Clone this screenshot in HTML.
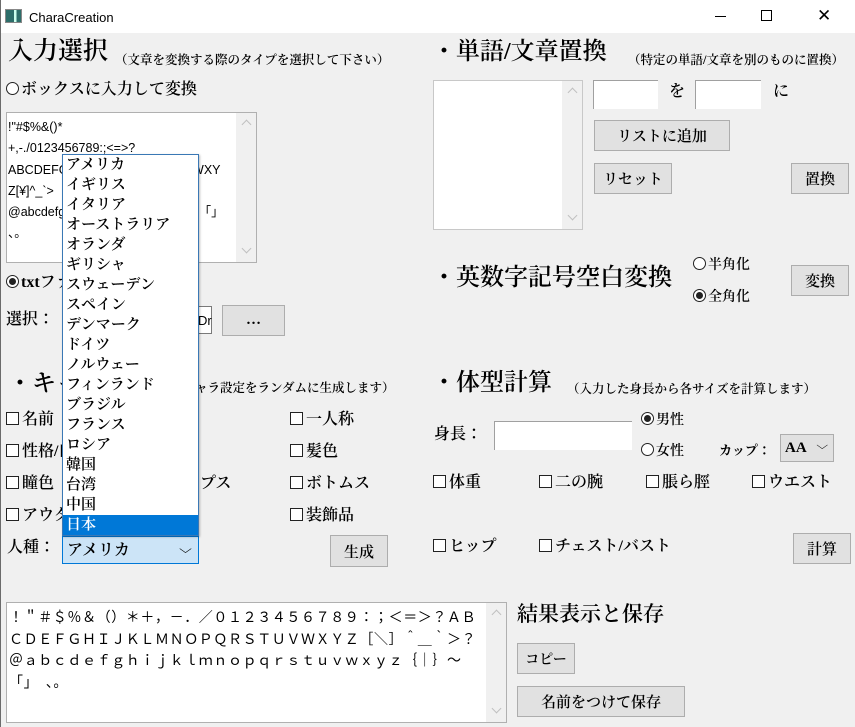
<!DOCTYPE html>
<html><head><meta charset="utf-8">
<style>
*{margin:0;padding:0;box-sizing:border-box}
body{width:855px;height:727px;background:#f0f0f0;position:relative;overflow:hidden;font-family:"Liberation Serif","Noto Serif CJK JP","Noto Serif CJK SC",serif;color:#000}
.t{position:absolute;white-space:nowrap;line-height:1}
.h{font-size:24px;font-weight:600}
.s{font-size:12.5px;font-weight:600}
.m{font-size:16px;font-weight:600}
.box{position:absolute;background:#fff;border:1px solid #a0a0a0}
.btn{position:absolute;background:#e1e1e1;border:1px solid #adadad;font-size:15px;font-weight:600;display:flex;align-items:center;justify-content:center;white-space:nowrap}
.sb{position:absolute;right:0;top:0;bottom:0;width:20px;background:#f0f0f0}
.sb:before,.sb:after{content:"";position:absolute;left:7px;width:6px;height:6px;border-left:1px solid #c0c0c0;border-top:1px solid #c0c0c0}
.sb:before{top:8px;transform:rotate(45deg)}
.sb:after{bottom:10px;transform:rotate(225deg)}
.cb{display:inline-block;width:13px;height:13px;border:1px solid #222;background:#fff;vertical-align:-1px;margin-right:3px}
.rb{display:inline-block;width:13px;height:13px;border:1px solid #222;border-radius:50%;background:#fff;vertical-align:-1px;margin-right:2px;position:relative}
.rb.on:after{content:"";position:absolute;left:2px;top:2px;width:7px;height:7px;border-radius:50%;background:#222}
.sans{font-family:"Liberation Sans","Noto Sans CJK JP",sans-serif;font-weight:normal}
</style></head><body>
<div style="position:absolute;left:0;top:0;width:855px;height:33px;background:#fff"></div>
<div style="position:absolute;left:0;top:0;width:1px;height:727px;background:#6b6b6b"></div>
<div style="position:absolute;left:5px;top:9px;width:17px;height:14px;border:1px solid #888;background:linear-gradient(90deg,#2d6e6a 0 55%,#cfe 55% 70%,#2d6e6a 70%)"></div>
<div class="t sans" style="left:29px;top:11px;font-size:13px">CharaCreation</div>
<div style="position:absolute;left:715px;top:16px;width:11px;height:1px;background:#000"></div>
<div style="position:absolute;left:761px;top:10px;width:11px;height:11px;border:1px solid #000"></div>
<div class="t sans" style="left:817px;top:7px;font-size:17px;font-weight:300">✕</div>

<div class="t h" style="left:8px;top:39px;font-size:25px">入力選択</div>
<div class="t s" style="left:115px;top:54px">（文章を変換する際のタイプを選択して下さい）</div>
<div class="t m" style="left:6px;top:82px"><span class="rb"></span>ボックスに入力して変換</div>
<div class="box" style="left:6px;top:112px;width:251px;height:151px;border-color:#b0b0b0"><div class="sb"></div>
<div class="sans" style="position:absolute;left:1px;top:4px;font-size:12.5px;line-height:21.3px">!"#$%&amp;()*<br>+,-./0123456789:;&lt;=&gt;?<br>ABCDEFGHIJKLMNOPQRSTUVWXY<br>Z[¥]^_`&gt;<br>@abcdefghijklmnopqrstuvwxyz{|}~「」<br>、。</div></div>
<div class="t m" style="left:6px;top:275px"><span class="rb on"></span>txtファイルを選択</div>
<div class="t m" style="left:6px;top:312px">選択：</div>
<div class="box" style="left:62px;top:306px;width:150px;height:28px;border-color:#7a7a7a"><span class="sans" style="position:absolute;left:135px;top:6px;font-size:13px">Dr</span></div>
<div class="btn" style="left:222px;top:305px;width:63px;height:31px">…</div>

<div class="t h" style="left:8px;top:372px">・キャラ作成</div>
<div class="t s" style="left:170px;top:382px">（キャラ設定をランダムに生成します）</div>
<div class="t m" style="left:6px;top:412px"><span class="cb"></span>名前</div>
<div class="t m" style="left:6px;top:444px"><span class="cb"></span>性格/口調</div>
<div class="t m" style="left:6px;top:476px"><span class="cb"></span>瞳色</div>
<div class="t m" style="left:6px;top:508px"><span class="cb"></span>アウター</div>
<div class="t m" style="left:200px;top:476px">プス</div>
<div class="t m" style="left:290px;top:412px"><span class="cb"></span>一人称</div>
<div class="t m" style="left:290px;top:444px"><span class="cb"></span>髪色</div>
<div class="t m" style="left:290px;top:476px"><span class="cb"></span>ボトムス</div>
<div class="t m" style="left:290px;top:508px"><span class="cb"></span>装飾品</div>
<div class="t m" style="left:7px;top:540px">人種：</div>
<div style="position:absolute;left:62px;top:536px;width:137px;height:28px;background:#cce4f7;border:1px solid #0078d7"><span class="t m" style="left:4px;top:6px">アメリカ</span><span class="t sans" style="left:118px;top:6px;font-size:12px;transform:scaleX(1.4)">⌵</span></div>
<div class="btn" style="left:330px;top:535px;width:58px;height:32px">生成</div>

<div style="position:absolute;left:62px;top:154px;width:137px;height:382px;background:#fff;border:1px solid #3a78b5;z-index:5;font-size:15px;font-weight:600;box-shadow:1px 1px 2px rgba(0,0,0,.25)">
<div style="line-height:20px;padding-left:3px">アメリカ<br>イギリス<br>イタリア<br>オーストラリア<br>オランダ<br>ギリシャ<br>スウェーデン<br>スペイン<br>デンマーク<br>ドイツ<br>ノルウェー<br>フィンランド<br>ブラジル<br>フランス<br>ロシア<br>韓国<br>台湾<br>中国</div>
<div style="background:#0078d7;color:#fff;line-height:20px;padding-left:3px">日本</div></div>

<div class="box" style="left:6px;top:602px;width:501px;height:121px;border-color:#b0b0b0"><div class="sb"></div>
<div class="sans" style="position:absolute;left:2px;top:4px;font-size:14px;line-height:21.5px;letter-spacing:0.6px;width:476px;overflow:hidden;white-space:nowrap">！＂＃＄％＆（）＊＋，－．／０１２３４５６７８９：；＜＝＞？ＡＢ<br>ＣＤＥＦＧＨＩＪＫＬＭＮＯＰＱＲＳＴＵＶＷＸＹＺ［＼］＾＿｀＞？<br>＠ａｂｃｄｅｆｇｈｉｊｋｌｍｎｏｐｑｒｓｔｕｖｗｘｙｚ｛｜｝～<br>「」　、。</div></div>

<div class="t h" style="left:432px;top:40px">・単語/文章置換</div>
<div class="t s" style="left:628px;top:54px">（特定の単語/文章を別のものに置換）</div>
<div class="box" style="left:433px;top:80px;width:150px;height:150px;border-color:#c8c8c8"><div class="sb"></div></div>
<div class="box" style="left:593px;top:80px;width:65px;height:29px;border:none;border-left:1px solid #a0a0a0;border-top:1px solid #a0a0a0"></div>
<div class="t m" style="left:669px;top:84px">を</div>
<div class="box" style="left:695px;top:80px;width:66px;height:29px;border:none;border-left:1px solid #a0a0a0;border-top:1px solid #a0a0a0"></div>
<div class="t m" style="left:773px;top:84px">に</div>
<div class="btn" style="left:594px;top:120px;width:136px;height:31px">リストに追加</div>
<div class="btn" style="left:594px;top:163px;width:78px;height:31px">リセット</div>
<div class="btn" style="left:791px;top:163px;width:58px;height:31px">置換</div>

<div class="t h" style="left:432px;top:266px">・英数字記号空白変換</div>
<div class="t" style="left:693px;top:257px;font-size:14px;font-weight:600"><span class="rb"></span>半角化</div>
<div class="t" style="left:693px;top:289px;font-size:14px;font-weight:600"><span class="rb on"></span>全角化</div>
<div class="btn" style="left:791px;top:265px;width:58px;height:31px">変換</div>

<div class="t h" style="left:432px;top:371px">・体型計算</div>
<div class="t s" style="left:567px;top:383px">（入力した身長から各サイズを計算します）</div>
<div class="t m" style="left:434px;top:427px">身長：</div>
<div class="box" style="left:494px;top:421px;width:138px;height:29px;border:none;border-left:1px solid #a0a0a0;border-top:1px solid #a0a0a0"></div>
<div class="t" style="left:641px;top:412px;font-size:14px;font-weight:600"><span class="rb on"></span>男性</div>
<div class="t" style="left:641px;top:443px;font-size:14px;font-weight:600"><span class="rb"></span>女性</div>
<div class="t" style="left:719px;top:444px;font-size:13px;font-weight:bold">カップ：</div>
<div style="position:absolute;left:780px;top:434px;width:54px;height:28px;background:#e1e1e1;border:1px solid #adadad"><span class="t" style="left:4px;top:6px;font-size:15px;font-weight:600">AA</span><span class="t sans" style="left:37px;top:6px;font-size:11px;transform:scaleX(1.4)">⌵</span></div>
<div class="t m" style="left:433px;top:475px"><span class="cb"></span>体重</div>
<div class="t m" style="left:539px;top:475px"><span class="cb"></span>二の腕</div>
<div class="t m" style="left:646px;top:475px"><span class="cb"></span>脹ら脛</div>
<div class="t m" style="left:752px;top:475px"><span class="cb"></span>ウエスト</div>
<div class="t m" style="left:433px;top:539px"><span class="cb"></span>ヒップ</div>
<div class="t m" style="left:539px;top:539px"><span class="cb"></span>チェスト/バスト</div>
<div class="btn" style="left:793px;top:533px;width:58px;height:31px">計算</div>

<div class="t" style="left:517px;top:604px;font-size:21px;font-weight:600">結果表示と保存</div>
<div class="btn" style="left:517px;top:643px;width:58px;height:31px;font-size:14px">コピー</div>
<div class="btn" style="left:517px;top:686px;width:168px;height:31px">名前をつけて保存</div>
</body></html>
